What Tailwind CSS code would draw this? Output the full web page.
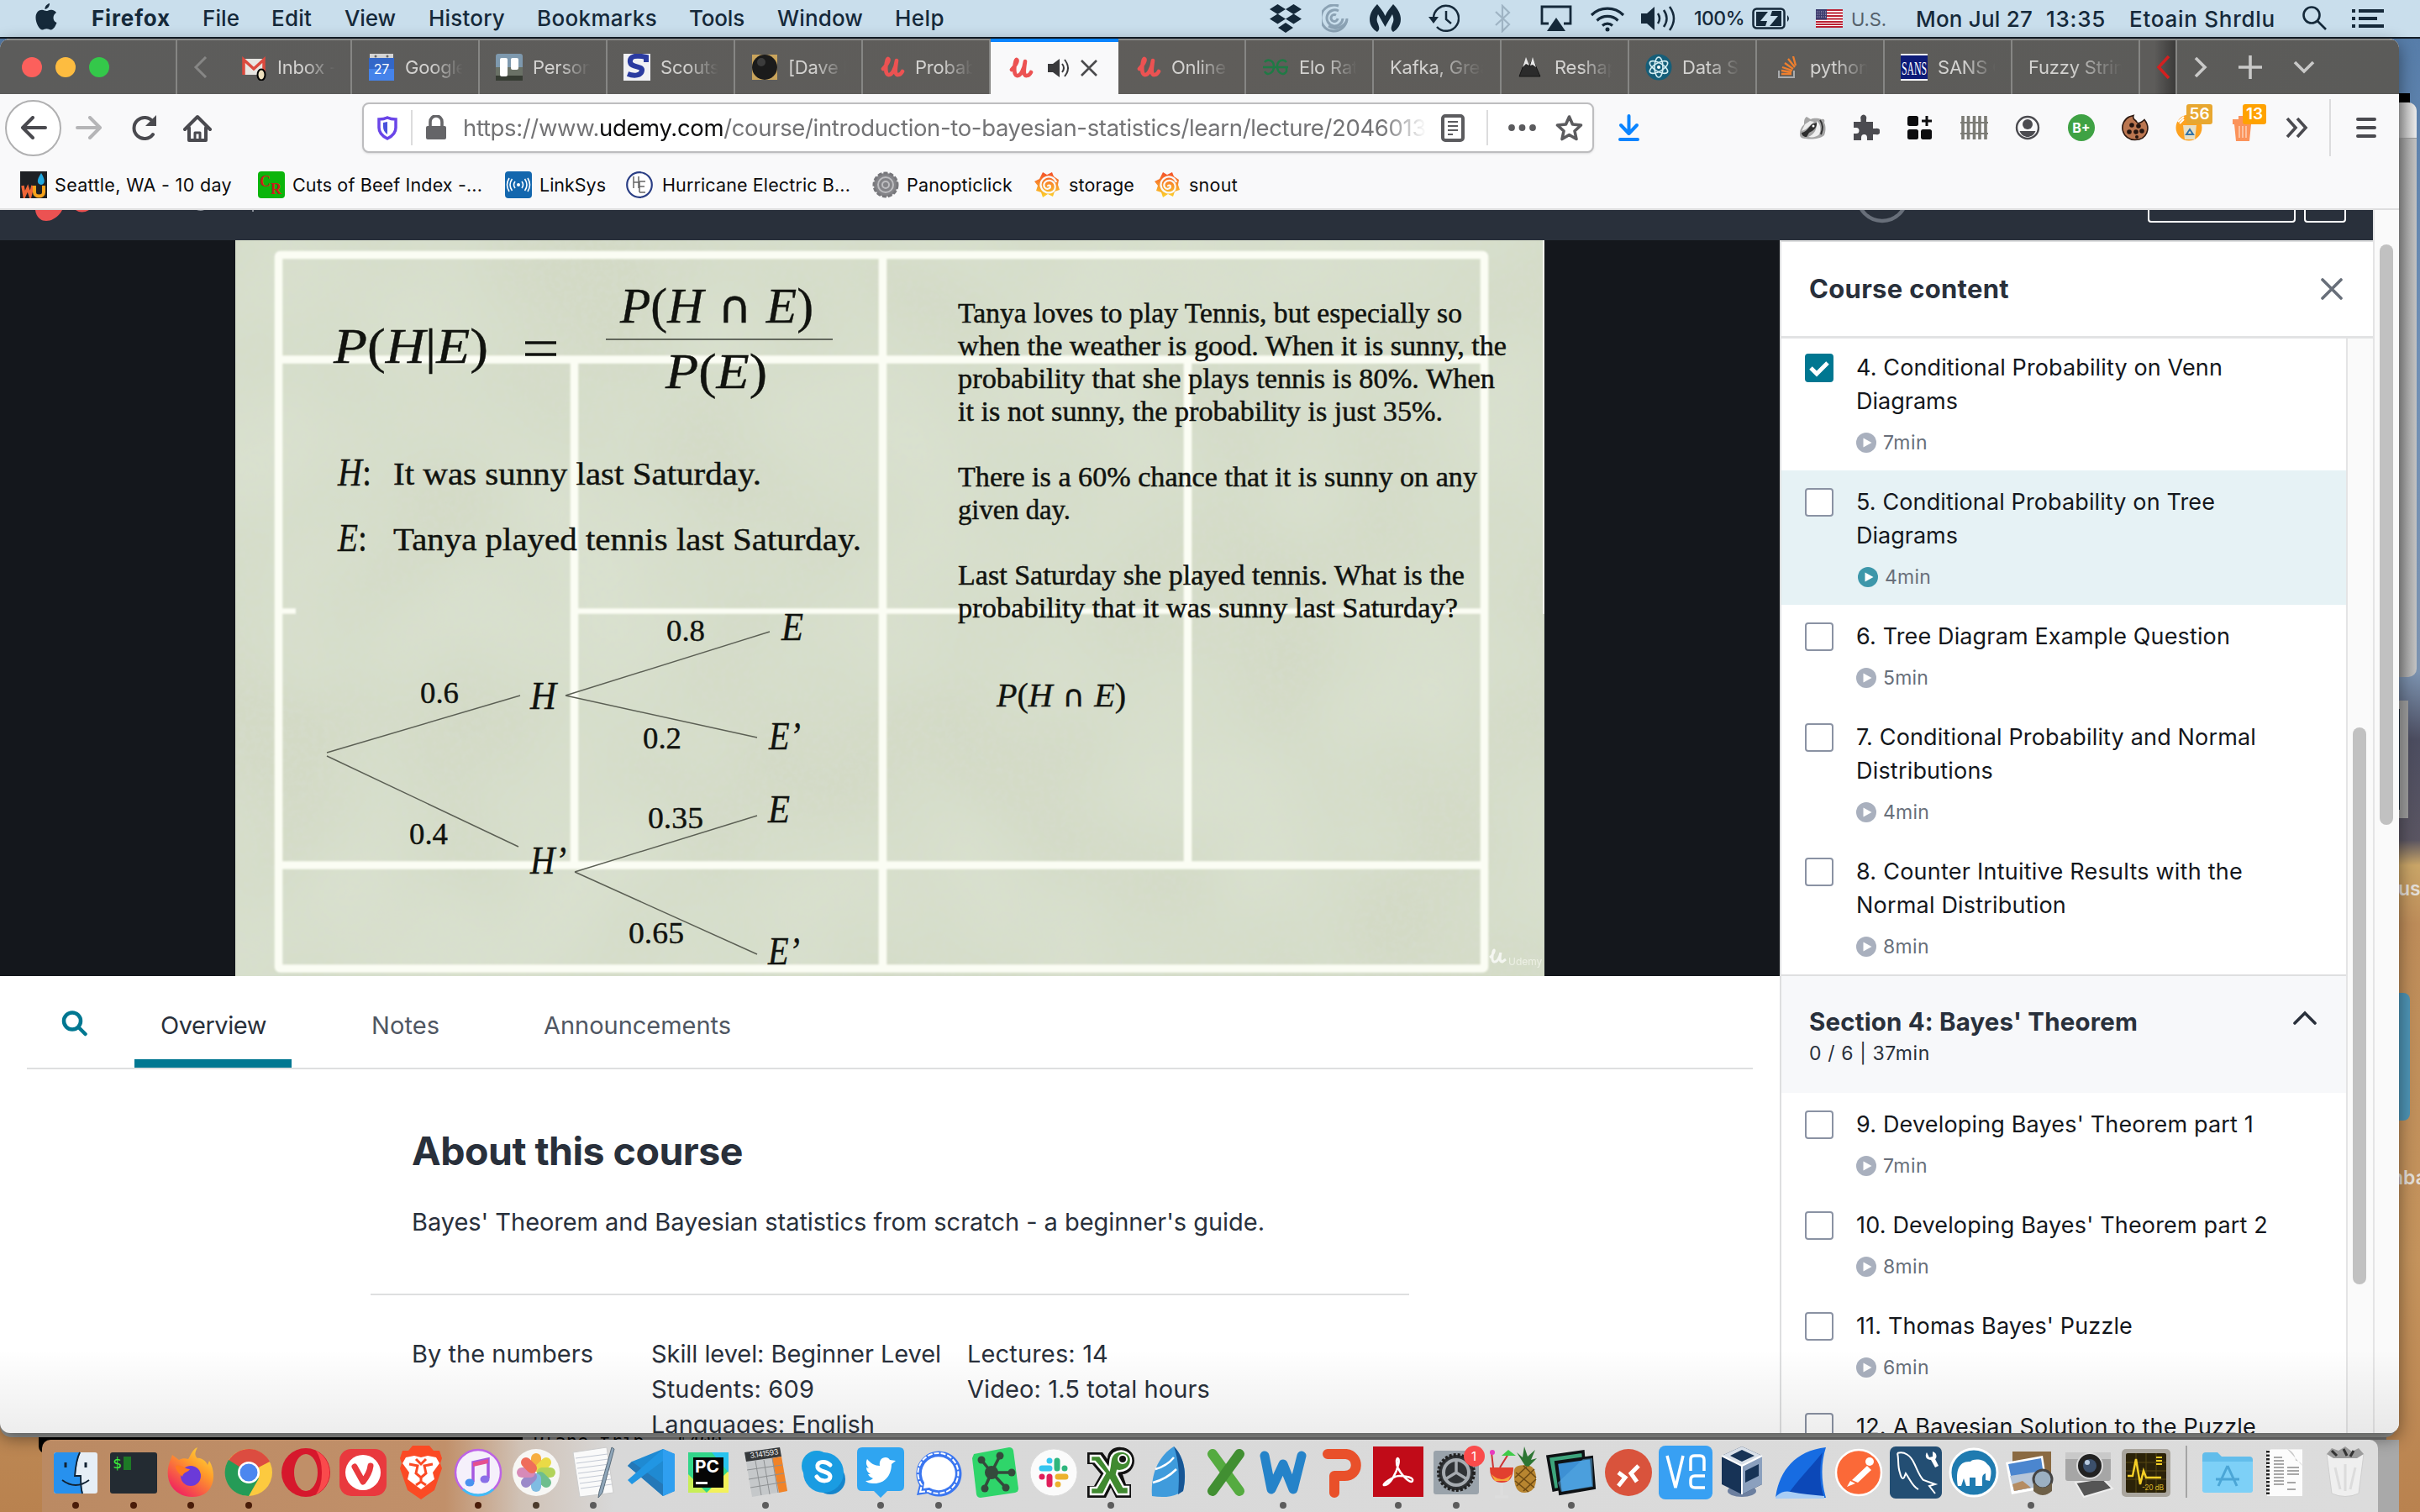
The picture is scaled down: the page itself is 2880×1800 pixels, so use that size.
<!DOCTYPE html>
<html lang="en">
<head>
<meta charset="utf-8">
<title>Introduction to Bayesian Statistics</title>
<script src="https://cdn.jsdelivr.net/npm/@tailwindcss/browser@4"></script>
</head>
<body class="relative w-[2880px] h-[1800px] overflow-hidden bg-[#5f82aa] font-['Inter','Liberation_Sans',sans-serif] [&_[data-w]]:whitespace-nowrap">

<svg class="absolute w-0 h-0">
  <symbol id="udemy" viewBox="0 0 28 26"><path d="M3 15C7 11 11 4 9 3 7 2 4 21 9 22c5 1 9-9 10-17-1 8-3 18 2 17 2 0 4-2 5-4" fill="none" stroke="#ec5252" stroke-width="4.6" stroke-linecap="round" stroke-linejoin="round"/></symbol>
  <symbol id="play" viewBox="0 0 24 24"><circle cx="12" cy="12" r="12" fill="currentColor"/><path d="M8.500 6.500v11L18.500 12z" fill="#fff"/></symbol>
  <symbol id="grafana" viewBox="0 0 32 32"><defs><linearGradient id="gg" x1="0" y1="0" x2="0" y2="1"><stop offset="0" stop-color="#f4502a"/><stop offset="1" stop-color="#fcd22b"/></linearGradient></defs><path d="M10 1l5 3 6-3 2 5 6 4-1 6 2 6-6 2-2 6-6-3-6 4-2-6-6-2 2-6-4-5 6-3z" fill="url(#gg)"/><path d="M27 15a10 10 0 1 0-6 9M21 24" fill="none"/><path d="M26 13a9.500 9.500 0 1 0-4 11c4-3 4-11-3-13-6-1-9 4-7 8 2 3 7 2 7-1 0-2-3-2-3 0" fill="none" stroke="#f9f9f9" stroke-width="2.200"/></symbol>
</svg>

<!-- desktop, visible along the right and bottom edges -->
<div class="absolute left-0 top-0 w-[2880px] h-[1800px] bg-[linear-gradient(180deg,#547ba8_0px,#6f8fb5_420px,#7c93b0_800px,#4c4d60_880px,#5a5562_1000px,#c9a567_1030px,#bd8c59_1100px,#c4935c_1500px,#b9824f_1800px)]"></div>
<div class="absolute left-[2840px] top-[111px] w-[28px] h-[30px] bg-black"></div>
<div class="absolute left-[2800px] top-[122px] w-[76px] h-[684px] rounded-[10px] bg-[linear-gradient(90deg,#8f8f8f_70%,#c4c4c4)] overflow-hidden"><div class="h-[43px] bg-[linear-gradient(90deg,#a6a6a6_70%,#ececec)] border-b border-[#999]"></div></div>
<div class="absolute left-[2840px] top-[834px] w-[26px] h-[140px] bg-[#1c2836] border-[10px] border-l-0 border-[#9b9b9b]"></div>
<div class="absolute left-[2855px] top-[1182px] w-[13px] h-[152px] rounded-r-lg bg-[#4d93b4]"></div>
<div class="absolute left-[2854px] top-[1044px] text-[23px] font-semibold text-[#e4dfd8] leading-7">us</div>
<div class="absolute left-[2846px] top-[1388px] text-[23px] font-semibold text-[#e4dfd8] leading-7">nba</div>
<!-- windows stacked behind the browser -->
<div class="absolute left-[46px] top-[1690px] w-[576px] h-[40px] rounded-b-lg bg-black"></div>
<div class="absolute left-[622px] top-[1690px] w-[2218px] h-[60px] bg-[#747474] overflow-hidden text-[22px] font-['DejaVu_Sans_Mono',monospace] pl-3 pt-3 leading-7">Plane trip - $400</div>
<div class="absolute left-[2500px] top-[1714px] w-[355px] h-[86px] bg-[#a9a9a9]"></div>
<div class="absolute left-0 top-[1690px] w-[2852px] h-[21px] rounded-b-[14px] bg-[#9b9c9a]"></div>

<!-- menu bar -->
<header class="absolute left-0 top-0 w-[2880px] h-[46px] bg-[#c9deec] border-b-2 border-[#141d27] flex items-center text-[26px] font-medium text-[#15293a] whitespace-nowrap">
  <svg class="ml-[42px] w-[26px] h-[32px] mb-1" viewBox="0 0 26 32" fill="#15293a"><path d="M17 0c.4 3-2.500 7-5.500 7C11 4 14 .6 17 0zM21.500 17c0-3 2-5 3.500-6-2-3-5-3.300-6.500-3.300-2.300 0-4 1.400-5.300 1.400-1.400 0-3-1.300-5.200-1.300C4 7.800.500 11 .500 17c0 6.500 4.500 14.500 8 14.500 1.800 0 2.700-1.200 5-1.200s3 1.200 5 1.200c3.300 0 6-5.500 7-8.500-3-1.200-4-3.500-4-6z"/></svg>
  <nav class="flex ml-[41px] leading-[44px]">
    <div class="w-[132px] font-bold"><span data-w="94">Firefox</span></div>
    <div class="w-[82px]"><span data-w="44">File</span></div>
    <div class="w-[87px]"><span data-w="48">Edit</span></div>
    <div class="w-[100px]"><span data-w="61">View</span></div>
    <div class="w-[129px]"><span data-w="91">History</span></div>
    <div class="w-[181px]"><span data-w="143">Bookmarks</span></div>
    <div class="w-[105px]"><span data-w="66">Tools</span></div>
    <div class="w-[140px]"><span data-w="102">Window</span></div>
    <div class="w-[446px]"><span data-w="59">Help</span></div>
  </nav>
  <div class="flex items-center">
    <svg class="w-[38px] h-[34px]" viewBox="0 0 38 34" fill="#15293a"><path d="M9.500 0L19 6l-9.500 6L0 6zM28.500 0L38 6l-9.500 6L19 6zM9.500 11.500L19 17.500l-9.500 6-9.500-6zM28.500 11.500L38 17.500l-9.500 6-9.500-6zM19 22l9 6-9 6-9-6z"/></svg>
    <svg class="ml-[24px] w-[32px] h-[34px]" viewBox="0 0 32 34" fill="none" stroke="#8ba2b4" stroke-width="3"><path d="M20 2A15.500 15.500 0 1 0 30 17M20 8A9.500 9.500 0 1 0 25 17M17 13a4 4 0 1 0 2 4"/><path d="M8 26a15 15 0 0 0 22-7"/></svg>
    <svg class="ml-[25px] w-[37px] h-[34px]" viewBox="0 0 37 34" fill="#15293a"><path d="M9 0c3 4 7 8 9.500 14C21 8 25 4 28 0c6 6 9 12 9 18 0 7-4 12-9 15-4-3-2-7 0-12 1-3 0-6-1-9l-8.500 15L10 12c-1 3-2 6-1 9 2 5 4 9 0 12-5-3-9-8-9-15C0 12 3 6 9 0z"/></svg>
    <svg class="ml-[32px] w-[38px] h-[34px]" viewBox="0 0 38 34" fill="none" stroke="#15293a" stroke-width="2.500"><path d="M7 17A15 15 0 1 1 11 27"/><path d="M1 15h12l-6 8z" fill="#15293a" stroke="none"/><path d="M22 8v10l6 5"/></svg>
    <svg class="ml-[42px] w-[19px] h-[34px]" viewBox="0 0 19 34" fill="none" stroke="#9fb4c4" stroke-width="2.200"><path d="M1 9l16 15-8 8V2l8 8L1 25"/></svg>
    <svg class="ml-[35px] w-[38px] h-[32px]" viewBox="0 0 38 32"><path d="M10 22H2V2h34v20h-8" fill="none" stroke="#15293a" stroke-width="2.800"/><path d="M19 15l11 16H8z" fill="#15293a"/></svg>
    <svg class="ml-[21px] w-[42px] h-[31px]" viewBox="0 0 42 31" fill="none" stroke="#15293a" stroke-width="3.200"><path d="M2 11a27 27 0 0 1 38 0M8.500 17.500a18 18 0 0 1 25 0M15 23.500a9 9 0 0 1 12 0"/><circle cx="21" cy="28" r="2.500" fill="#15293a" stroke="none"/></svg>
    <svg class="ml-[19px] w-[43px] h-[32px]" viewBox="0 0 43 32"><path d="M0 10h7l9-8v28l-9-8H0z" fill="#15293a"/><path d="M20 10q4 6 0 12M27 6q7 10 0 20M34 2q10 14 0 28" fill="none" stroke="#15293a" stroke-width="2.500"/></svg>
    <div class="ml-[20px] w-[69px] text-[23px]"><span data-w="60">100%</span></div>
    <svg class="w-[46px] h-[26px]" viewBox="0 0 46 26"><rect x="1.500" y="1.500" width="37" height="23" rx="4" fill="none" stroke="#15293a" stroke-width="2.500"/><path d="M5 5h14L10 16h8l-2 6H5zM24 4h11v18H21l10-12h-9z" fill="#15293a"/><path d="M42 9q4 4 0 8z" fill="#15293a"/></svg>
    <svg class="ml-[30px] w-[32px] h-[22px]" viewBox="0 0 32 22"><path fill="#fff" d="M0 0h32v22H0z"/><path d="M0 1h32M0 4.500h32M0 8h32M0 11.500h32M0 15h32M0 18h32M0 21h32" stroke="#bb2134" stroke-width="1.800"/><path fill="#3c3b6e" d="M0 0h13v12.500H0z"/><path d="M1 3h12M1 6h12M1 9h12" stroke="#c5c4da" stroke-dasharray="1 1.500"/></svg>
    <div class="ml-[10px] w-[77px] text-[22px] font-normal text-[#55616b] pt-0.5"><span data-w="42">U.S.</span></div>
    <div class="w-[155px]"><span data-w="139">Mon Jul 27</span></div>
    <div class="w-[99px]"><span data-w="71">13:35</span></div>
    <div class="w-[206px]"><span data-w="174">Etoain Shrdlu</span></div>
    <svg class="w-[30px] h-[30px]" viewBox="0 0 30 30" fill="none" stroke="#15293a" stroke-width="2.600"><circle cx="11" cy="11" r="9.500"/><path d="M18 18l10 10"/></svg>
    <svg class="ml-[29px] w-[38px] h-[22px]" viewBox="0 0 38 22" fill="#15293a"><path d="M0 0h4v4H0zM8 0h30v4H8zM0 9h4v4H0zM8 9h22v4H8zM0 18h4v4H0zM8 18h30v4H8z"/></svg>
  </div>
</header>

<!-- browser window -->
<main class="absolute left-0 top-[46px] w-[2855px] h-[1660px] rounded-[12px] overflow-hidden bg-white shadow-[0_6px_20px_rgba(0,0,0,0.45)] flex flex-col">

  <!-- tab strip -->
  <div class="h-[66px] shrink-0 bg-[linear-gradient(90deg,#5c5c5b,#5f5d5a_50%,#5b5b59)] border-t-2 border-[#8a8a88] flex text-[22px] text-[#d3d2d0] leading-[64px] tracking-[-0.01em] whitespace-nowrap">
    <div class="w-[211px] flex items-center pl-[26px] gap-4 border-r-2 border-[#868684]"><i class="size-6 rounded-full bg-[#fc605c]"></i><i class="size-6 rounded-full bg-[#fdbc40]"></i><i class="size-6 rounded-full bg-[#34c84a]"></i></div>
    <div class="w-[56px] flex items-center pl-[19px]"><svg class="w-[17px] h-[26px]" viewBox="0 0 17 26" fill="none" stroke="#868685" stroke-width="3"><path d="M15 1L3 13l12 12"/></svg></div>
    <div class="flex [&>div]:w-[152px] [&>div]:flex [&>div]:items-center [&>div]:pl-[19px] [&>div]:border-r-2 [&>div]:border-[#868684] [&>div]:overflow-hidden [&_p]:ml-3 [&_p]:w-[70px] [&_p]:overflow-hidden [&_p]:shrink-0 [&_p]:[mask-image:linear-gradient(90deg,#000_45%,transparent_98%)] [&_svg]:shrink-0">
      <div><svg class="w-[32px] h-[32px]" viewBox="0 0 32 32"><path fill="#e8e6e2" d="M3 6h26v19H3z"/><path d="M4 25V7l12 11L28 7v18" fill="none" stroke="#dc4a3e" stroke-width="3.500"/><ellipse cx="25" cy="25" rx="4.500" ry="6.500" fill="#eee0bd" stroke="#000" stroke-width="2"/></svg><p>Inbox -</p></div>
      <div><svg class="w-[32px] h-[32px]" viewBox="0 0 32 32"><path fill="#d4d4d4" d="M2 0h28v6H2z"/><path fill="#3367c8" d="M1 5h30v14H1z"/><path fill="#4583ea" d="M1 18h30v14H1z"/><circle cx="9" cy="3" r="1.500" fill="#666"/><circle cx="23" cy="3" r="1.500" fill="#666"/><text x="16" y="24" text-anchor="middle" font-size="16" fill="#fff" font-family="Inter">27</text></svg><p>Google</p></div>
      <div><svg class="w-[32px] h-[32px]" viewBox="0 0 32 32"><rect width="32" height="32" rx="3" fill="#7e99ae"/><path d="M0 16h32v16H0z" fill="#6a7166"/><path d="M0 26h32v6H0z" fill="#363c33"/><rect x="5" y="5" width="9" height="22" rx="2" fill="#fff"/><rect x="18" y="5" width="9" height="14" rx="2" fill="#fff"/></svg><p>Persona</p></div>
      <div><svg class="w-[32px] h-[32px]" viewBox="0 0 32 32"><path fill="#f1f1f4" d="M0 0h32v32H0z"/><path d="M27 10V4C14 1 7 3 8 10s15 4 14 10-9 7-17 4" fill="none" stroke="#2b3ba0" stroke-width="6"/></svg><p>Scouts</p></div>
      <div><svg class="w-[32px] h-[32px]" viewBox="0 0 32 32"><path fill="#c9a45c" d="M1 1h30v30H1z"/><circle cx="16" cy="16" r="15" fill="#1b1b1b"/><circle cx="12" cy="10" r="5" fill="#3c3c3c"/></svg><p>[Dave M</p></div>
      <div><svg class="w-[30px] h-[26px] ml-px"><use href="#udemy"/></svg><p>Probab</p></div>
      <div class="bg-[#f9f9fa] border-t-4 !border-t-[#0a84ff] -mt-[2px] !border-r-0"><svg class="w-[30px] h-[26px] ml-0.5"><use href="#udemy"/></svg><svg class="ml-[17px] w-[28px] h-[24px]" viewBox="0 0 28 24"><path d="M0 7h6l8-6v22l-8-6H0z" fill="#3a3a3c"/><path d="M17 7q4 5 0 10M20 2q8 10 0 20" stroke="#3a3a3c" stroke-width="2" fill="none"/></svg><svg class="ml-[11px] w-[20px] h-[20px]" viewBox="0 0 20 20" stroke="#4a4a4c" stroke-width="2.600"><path d="M1 1l18 18M19 1L1 19"/></svg></div>
      <div><svg class="w-[30px] h-[26px] ml-0.5"><use href="#udemy"/></svg><p>Online C</p></div>
      <div><svg class="w-[32px] h-[20px]" viewBox="0 0 32 20" fill="none" stroke="#1f7a45" stroke-width="2.500"><path d="M1 10h30M3 4c3-4 11-3 11 5s-8 12-11 6M29 4c-3-4-11-3-11 5s8 12 11 6v-5"/></svg><p>Elo Rat</p></div>
      <div><p class="!ml-0 !w-[114px]">Kafka, Great</p></div>
      <div><svg class="w-[32px] h-[28px]" viewBox="0 0 32 28"><path d="M2 25L10 4l4 9 4-9 9 21z" fill="#2b2b2b" stroke="#161616"/><path d="M10 2l4 10-4-2-4 4zM18 2l4 12-4-3-3 1z" fill="#e9e9e9"/></svg><p>Reshap</p></div>
      <div><svg class="w-[32px] h-[32px]" viewBox="0 0 32 32"><circle cx="16" cy="16" r="15.500" fill="#155e79"/><g fill="none" stroke="#d5eef3" stroke-width="1.600"><ellipse cx="16" cy="16" rx="5" ry="12"/><ellipse cx="16" cy="16" rx="5" ry="12" transform="rotate(60 16 16)"/><ellipse cx="16" cy="16" rx="5" ry="12" transform="rotate(120 16 16)"/></g><circle cx="16" cy="16" r="2" fill="#fff"/></svg><p>Data Sc</p></div>
      <div><svg class="w-[32px] h-[26px]" viewBox="0 0 32 26" fill="none"><path d="M7 17v8h18v-8" stroke="#a9abad" stroke-width="2"/><path d="M10 21h12M10 17l12 2M11 13l12 4M14 8l10 7M18 3l8 10M24 0l3 11" stroke="#ee7f2e" stroke-width="2.300"/></svg><p>python</p></div>
      <div><svg class="w-[32px] h-[32px]" viewBox="0 0 32 32"><path fill="#fff" d="M0 0h32v32H0z"/><path fill="#0d1b78" d="M0 2h32v28H0z"/><text x="1" y="25" textLength="30" lengthAdjust="spacingAndGlyphs" font-size="24" fill="#fff" font-family="Liberation Serif">SANS</text></svg><p>SANS C</p></div>
      <div><p class="!ml-0 !w-[114px]">Fuzzy String</p></div>
    </div>
    <div class="w-[44px] flex items-center pl-[18px] border-r-2 border-[#868684] bg-[linear-gradient(90deg,#5d5c5a_40%,#3c3b3a)]"><svg class="w-[20px] h-[28px]" viewBox="0 0 20 28" fill="none" stroke="#d32020" stroke-width="3.500"><path d="M16 1L4 14l12 13"/></svg></div>
    <div class="flex items-center pl-5 gap-[37px]">
      <svg class="w-[16px] h-[26px]" viewBox="0 0 16 26" fill="none" stroke="#c9c9c8" stroke-width="3.600"><path d="M2 2l11 11L2 24"/></svg>
      <svg class="w-[28px] h-[28px]" viewBox="0 0 28 28" stroke="#c9c9c8" stroke-width="3.600"><path d="M14 0v28M0 14h28"/></svg>
      <svg class="w-[26px] h-[16px]" viewBox="0 0 26 16" fill="none" stroke="#c9c9c8" stroke-width="3.600"><path d="M2 2l11 11L24 2"/></svg>
    </div>
  </div>

  <!-- navigation toolbar -->
  <div class="h-[80px] shrink-0 bg-[#f9f9fa] flex items-center pl-[6px] [&_svg]:shrink-0">
    <div class="size-[67px] shrink-0 rounded-full border-2 border-[#b0b0b1] bg-white flex items-center justify-center"><svg class="w-[32px] h-[28px]" viewBox="0 0 32 28" fill="none" stroke="#4a4a4f" stroke-width="4" stroke-linecap="round" stroke-linejoin="round"><path d="M30 14H3M15 2L3 14l12 12"/></svg></div>
    <svg class="ml-[17px] w-[32px] h-[28px]" viewBox="0 0 32 28" fill="none" stroke="#b5b5b7" stroke-width="4" stroke-linecap="round" stroke-linejoin="round"><path d="M2 14h27M17 2l12 12-12 12"/></svg>
    <svg class="ml-[34px] w-[32px] h-[30px]" viewBox="0 0 32 30" fill="none" stroke="#4a4a4f" stroke-width="4" stroke-linecap="round"><path d="M26 23a12.500 12.500 0 1 1 0-15"/><path d="M30 0v13H17z" fill="#4a4a4f" stroke="none"/></svg>
    <svg class="ml-[30px] w-[34px] h-[33px]" viewBox="0 0 34 33" fill="none" stroke="#4a4a4f" stroke-width="4" stroke-linecap="round" stroke-linejoin="round"><path d="M2 18L17 3l15 15M7 16v15h20V16"/><path d="M14 31v-9h6v9" stroke-width="3"/></svg>
    <div class="ml-[179px] w-[1466px] h-[60px] shrink-0 bg-white border-2 border-[#bdbdbf] rounded-lg shadow-sm flex items-center">
      <svg class="ml-[16px] w-[24px] h-[29px]" viewBox="0 0 24 29" fill="none"><path d="M12 2c4 2 7 2 10 2v10c0 6-4 10-10 13C6 24 2 20 2 14V4c3 0 6 0 10-2z" stroke="#6a45e8" stroke-width="3.500"/><path d="M12 7v15c-4-3-5-6-5-9V8z" fill="#4a51dc"/></svg>
      <i class="ml-[16px] w-[2px] h-[42px] bg-[#dcdcdd]"></i>
      <svg class="ml-[16px] w-[24px] h-[30px]" viewBox="0 0 24 30"><rect y="13" width="24" height="16" rx="2" fill="#656568"/><path d="M5 14V8a7 7 0 0 1 14 0v6" fill="none" stroke="#656568" stroke-width="3.600"/></svg>
      <div class="ml-[20px] w-[1164px] text-[27.5px] leading-[56px] text-[#737375] whitespace-nowrap [mask-image:linear-gradient(90deg,#000_94%,transparent_98.5%)]"><span data-w="1146">https://www.<span class="text-[#0c0c0d]">udemy.com</span>/course/introduction-to-bayesian-statistics/learn/lecture/2046013</span></div>
      <svg class="w-[28px] h-[33px]" viewBox="0 0 28 33" fill="none" stroke="#5b5b5e"><rect x="2" y="2" width="24" height="29" rx="3" stroke-width="4"/><path d="M8 9h12M8 14h12M8 19h12M8 24h6" stroke-width="2"/></svg>
      <i class="ml-[26px] w-[2px] h-[42px] bg-[#dcdcdd]"></i>
      <svg class="ml-[24px] w-[33px] h-[8px]" viewBox="0 0 33 8" fill="#5b5b5e"><circle cx="4" cy="4" r="3.900"/><circle cx="16.500" cy="4" r="3.900"/><circle cx="29" cy="4" r="3.900"/></svg>
      <svg class="ml-[23px] w-[33px] h-[32px]" viewBox="0 0 33 32" fill="none" stroke="#5b5b5e" stroke-width="3.600" stroke-linejoin="round"><path d="M16.500 3l4 9 10 1-7.500 7 2 9.500-8.500-5-8.500 5 2-9.500L2.500 13l10-1z"/></svg>
    </div>
    <svg class="ml-[29px] w-[25px] h-[32px]" viewBox="0 0 25 32" fill="none" stroke="#0a84ff" stroke-width="4" stroke-linecap="round" stroke-linejoin="round"><path d="M12.500 2v20M3 13l9.500 10 9.500-10M2 30h21"/></svg>
    <div class="ml-[174px] flex items-center [&>div]:w-[64px] [&>div]:flex [&>div]:justify-center [&>div]:relative">
      <div><svg class="w-[32px] h-[28px]" viewBox="0 0 32 28"><path d="M1 22c0-6 2-9 5-12 0-4 0-7 3-9l5 3c4-2 9-1 13 0 3-1 4 1 3 4 2 4 2 10 0 15-6 5-16 5-22 4-4 0-7-1-7-5z" fill="#a5a5a5"/><path d="M3 20c6-1 9-7 12-10l6-2c1 5-4 10-9 12l-3 5c-3 0-6-2-6-5z" fill="#2e2e2e"/><path d="M7 10l6-4 5 1-10 9-5 2z" fill="#ededed"/><path d="M21 6c4 3 6 9 3 16-3 3-8 4-13 3 7-3 11-9 10-19z" fill="#efefef"/><path d="M25 5c3 4 4 10 1 17" fill="none" stroke="#333" stroke-width="2"/><circle cx="17" cy="12" r="1.500" fill="#fff"/></svg></div>
      <div><svg class="w-[32px] h-[32px]" viewBox="0 0 32 32" fill="#4b4b50"><path d="M1 9h8.500V6a3.500 4 0 1 1 6.500 0v3h8v8h3a4 3.800 0 1 1 0 7h-3v7h-7v-3a3 3.500 0 0 0-7 0v3H1v-8h3a3 3 0 0 0 0-7H1z"/></svg></div>
      <div><svg class="w-[30px] h-[28px]" viewBox="0 0 30 28" fill="#0d0d0f"><rect width="13" height="12" rx="2.500"/><rect y="16" width="13" height="12" rx="2.500"/><rect x="16" y="16" width="13" height="12" rx="2.500"/><path d="M21.500 0h3v4.500H29v3h-4.500V12h-3V7.500H17v-3h4.500z"/></svg></div>
      <div><svg class="w-[33px] h-[28px]" viewBox="0 0 33 28" stroke="#7b7b75"><path d="M3 0v28M9.500 0v28M16.500 0v28M23 0v28M30 0v28" stroke-width="3.600"/><path d="M0 8h33M0 21h33" stroke-width="2"/></svg></div>
      <div><svg class="w-[30px] h-[30px]" viewBox="0 0 30 30"><circle cx="15" cy="15" r="13" fill="none" stroke="#4b4b50" stroke-width="2.400"/><circle cx="15" cy="11" r="6" fill="#4b4b50"/><path d="M5.500 19h19c-2 5-6 7-9.500 7s-7.500-2-9.500-7z" fill="#4b4b50"/></svg></div>
      <div><span class="size-8 rounded-full bg-[#3fa244] text-white font-bold text-[16px] leading-8 text-center">B+</span></div>
      <div><svg class="w-[32px] h-[32px]" viewBox="0 0 32 32"><path d="M14 1.500c-2 5 3 5 4 8 1 2 5 1 9-3 8 10 3 24-11 24A14.500 14.500 0 0 1 9 3z" fill="#bb7650" stroke="#2b1810" stroke-width="1.600"/><g fill="#241510"><circle cx="12" cy="13" r="2.800"/><circle cx="20" cy="14" r="2.800"/><circle cx="9" cy="21" r="2.800"/><circle cx="17" cy="21" r="2.800"/><circle cx="24" cy="20" r="2.800"/><circle cx="18" cy="27" r="2"/></g></svg></div>
      <div><svg class="w-[32px] h-[32px]" viewBox="0 0 32 32"><circle cx="16" cy="16" r="15.500" fill="#fda220"/><path d="M3 9l7-6M5 11l5-5" stroke="#fff" stroke-width="2"/><path d="M9 13h16l-2 17H11z" fill="#e8dfc4"/><path d="M13 24l4-6 4 6z" fill="none" stroke="#3273a7" stroke-width="2"/></svg><b class="absolute left-[29px] top-[-12px] w-[31px] h-[24px] rounded-[3px] bg-[#e8a730] text-white text-[19px] font-semibold leading-[24px] text-center">56</b></div>
      <div><svg class="w-[26px] h-[30px] mt-0.5" viewBox="0 0 26 30"><path d="M1 4h7V0h10v4h7v6h-2l-2 20H5L3 10H1z" fill="#fb935a"/><path d="M9 12v14M13 12v14M17 12v14" stroke="#fdc7a6" stroke-width="1.800"/></svg><b class="absolute left-[32px] top-[-12px] w-[28px] h-[24px] rounded-[3px] bg-[#ffa200] text-white text-[19px] font-semibold leading-[24px] text-center">13</b></div>
      <div><svg class="w-[27px] h-[24px]" viewBox="0 0 27 24" fill="none" stroke="#4b4b50" stroke-width="3.600"><path d="M2 1l10 11L2 23M14 1l10 11-10 11"/></svg></div>
    </div>
    <i class="ml-[7px] w-[2px] h-[68px] bg-[#dcdcdd]"></i>
    <svg class="ml-[30px] w-[24px] h-[24px]" viewBox="0 0 24 24" stroke="#4a4a4f" stroke-width="4" stroke-linecap="round"><path d="M2 2h20M2 12h20M2 22h20"/></svg>
  </div>

  <!-- bookmarks bar -->
  <div class="h-[58px] shrink-0 bg-[#f9f9fa] border-b-2 border-[#dededf] flex pl-[24px] items-center text-[21.5px] text-[#0c0c0d] whitespace-nowrap [&>div]:flex [&>div]:items-center [&>div]:gap-[9px] [&_svg]:size-8 [&_svg]:shrink-0">
    <div class="w-[283px]"><svg viewBox="0 0 32 32"><path fill="#1e2024" d="M0 0h32v32H0z"/><path d="M3 17l2 12 4-9 3 9 3-12" fill="none" stroke="#ef6537" stroke-width="3.500"/><path d="M17 17v8c0 6 11 6 11 0v-8" fill="none" stroke="#f5a21b" stroke-width="4"/><path d="M25 2c-6 9-5 13 0 14 5-1 5-6 0-14z" fill="#22a9e0"/></svg><span data-w="211">Seattle, WA - 10 day</span></div>
    <div class="w-[294px]"><svg viewBox="0 0 32 32"><rect width="32" height="32" rx="4" fill="#0bb50b"/><text x="2" y="18" font-size="18" font-weight="bold" fill="#c8201b" font-family="Liberation Serif">C</text><text x="15" y="27" font-size="18" font-weight="bold" fill="#c8201b" font-family="Liberation Serif">R</text></svg><span data-w="226">Cuts of Beef Index -...</span></div>
    <div class="w-[144px]"><svg viewBox="0 0 32 32"><rect width="32" height="32" rx="4" fill="#1367ae"/><circle cx="16" cy="16" r="2" fill="#fff"/><path d="M12 12q-3 4 0 8M20 12q3 4 0 8M8.500 9q-5 7 0 14M23.500 9q5 7 0 14M5 8q-5 8 0 16M27 8q5 8 0 16" fill="none" stroke="#fff" stroke-width="1.600"/></svg><span data-w="79">LinkSys</span></div>
    <div class="w-[293px] !gap-[11px]"><svg viewBox="0 0 32 32"><circle cx="16" cy="16" r="14.800" fill="#fff" stroke="#2b3f85" stroke-width="2.200"/><path d="M9 6v14M15 6v14M9 13h6M16 12v13M16 12h7M16 18h6M16 25h7" stroke="#666" stroke-width="1.500"/></svg><span data-w="224">Hurricane Electric B...</span></div>
    <div class="w-[193px]"><svg viewBox="0 0 32 32" fill="none"><circle cx="16" cy="16" r="14" fill="#848488" stroke="#77777b" stroke-width="3" stroke-dasharray="5 2"/><circle cx="16" cy="16" r="9" stroke="#bdbdc0" stroke-width="2"/><circle cx="16" cy="16" r="4" stroke="#bdbdc0" stroke-width="2"/></svg><span data-w="126">Panopticlick</span></div>
    <div class="w-[143px]"><svg><use href="#grafana"/></svg><span data-w="78">storage</span></div>
    <div><svg><use href="#grafana"/></svg><span data-w="58">snout</span></div>
  </div>

  <!-- page -->
  <div class="flex grow min-h-0">
    <div class="w-[2824px] shrink-0 flex flex-col">
      <!-- site header, scrolled mostly out of view -->
      <div class="relative h-[36px] shrink-0 bg-[#29303b] overflow-hidden">
        <svg class="w-[2824px] h-[36px]" viewBox="0 0 2824 36" fill="none"><path d="M42 0c1 8 6 13 13 13S70 8 74 0z" fill="#ec5252"/><path d="M90 0q7 5 16 0z" fill="#ec5252"/><path d="M234 0q5 2 9 0zM300 0h2v2h-2z" fill="#8b9099"/><circle cx="2240" cy="-16" r="29" stroke="#686f7a" stroke-width="4.500"/><rect x="2557" y="-40" width="174" height="54" rx="3" stroke="#fff" stroke-width="2"/><rect x="2743" y="-40" width="48" height="54" rx="3" stroke="#fff" stroke-width="2"/></svg>
      </div>
      <div class="flex grow min-h-0">
        <div class="w-[2118px] shrink-0 flex flex-col">
          <!-- video -->
          <div class="h-[876px] shrink-0 bg-[#14171c] pl-[280px]">
            <svg class="w-[1558px] h-[876px] bg-[#d3dac5]" viewBox="280 286 1558 876" font-family="'Liberation Serif',serif" fill="#11130f">
              <defs>
                <filter id="grain" x="0" y="0" width="100%" height="100%"><feTurbulence type="fractalNoise" baseFrequency="0.14" numOctaves="3" seed="4"/><feColorMatrix values="0 0 0 0 .68  0 0 0 0 .72  0 0 0 0 .64  .9 0 0 0 -.3"/></filter>
                <filter id="soft" x="-5%" y="-5%" width="110%" height="110%"><feGaussianBlur stdDeviation="1.300"/></filter>
                <filter id="tone" x="0" y="0" width="100%" height="100%"><feTurbulence type="fractalNoise" baseFrequency="0.005" numOctaves="2" seed="9"/><feColorMatrix values="0 0 0 0 .8  0 0 0 0 .88  0 0 0 0 .77  .5 0 0 0 -.1"/></filter>
              </defs>
              <rect x="280" y="286" width="1558" height="876" filter="url(#tone)"/>
              <rect x="280" y="286" width="1558" height="876" filter="url(#grain)"/>
              <g fill="none" stroke="#fbfdf4" stroke-width="9.500" filter="url(#soft)">
                <rect x="331.500" y="303.500" width="1435" height="849.500" rx="2"/>
                <path d="M331 428H1767M331 1030H1767M1050.500 303V1153M683.500 428V1030M1413.500 428V1030"/>
                <path d="M331 727.500h21M681 727.500h1086" stroke-width="6.500"/>
              </g>
              <path d="M1837 286v445" stroke="#f4f7ee" stroke-width="2"/>
              <g font-size="33.500" stroke="#11130f" stroke-width=".5">
                <text x="1140" y="384" textLength="600" lengthAdjust="spacingAndGlyphs">Tanya loves to play Tennis, but especially so</text>
                <text x="1140" y="423" textLength="653" lengthAdjust="spacingAndGlyphs">when the weather is good. When it is sunny, the</text>
                <text x="1140" y="462" textLength="639" lengthAdjust="spacingAndGlyphs">probability that she plays tennis is 80%. When</text>
                <text x="1140" y="501" textLength="577" lengthAdjust="spacingAndGlyphs">it is not sunny, the probability is just 35%.</text>
                <text x="1140" y="579" textLength="618" lengthAdjust="spacingAndGlyphs">There is a 60% chance that it is sunny on any</text>
                <text x="1140" y="618" textLength="134" lengthAdjust="spacingAndGlyphs">given day.</text>
                <text x="1140" y="695.500" textLength="603" lengthAdjust="spacingAndGlyphs">Last Saturday she played tennis. What is the</text>
                <text x="1140" y="734.500" textLength="595" lengthAdjust="spacingAndGlyphs">probability that it was sunny last Saturday?</text>
              </g>
              <g font-size="38.500" stroke="#11130f" stroke-width=".45">
                <text x="468" y="577" textLength="438" lengthAdjust="spacingAndGlyphs">It was sunny last Saturday.</text>
                <text x="468" y="655" textLength="557" lengthAdjust="spacingAndGlyphs">Tanya played tennis last Saturday.</text>
              </g>
              <g font-size="36" stroke="#11130f" stroke-width=".4">
                <text x="793" y="763" textLength="46" lengthAdjust="spacingAndGlyphs">0.8</text>
                <text x="500" y="837" textLength="46" lengthAdjust="spacingAndGlyphs">0.6</text>
                <text x="765" y="891" textLength="46" lengthAdjust="spacingAndGlyphs">0.2</text>
                <text x="771" y="986" textLength="66" lengthAdjust="spacingAndGlyphs">0.35</text>
                <text x="487" y="1005" textLength="46" lengthAdjust="spacingAndGlyphs">0.4</text>
                <text x="748" y="1122.500" textLength="66" lengthAdjust="spacingAndGlyphs">0.65</text>
              </g>
              <g font-size="46" font-style="italic" stroke="#11130f" stroke-width=".4">
                <text x="402" y="578" textLength="40" lengthAdjust="spacingAndGlyphs">H<tspan font-style="normal">:</tspan></text>
                <text x="402" y="656" textLength="35" lengthAdjust="spacingAndGlyphs">E<tspan font-style="normal">:</tspan></text>
                <text x="930" y="762" textLength="26" lengthAdjust="spacingAndGlyphs">E</text><text x="631" y="844" textLength="31" lengthAdjust="spacingAndGlyphs">H</text>
                <text x="915" y="892" textLength="38" lengthAdjust="spacingAndGlyphs">E’</text><text x="914" y="979" textLength="26" lengthAdjust="spacingAndGlyphs">E</text>
                <text x="631" y="1040" textLength="43" lengthAdjust="spacingAndGlyphs">H’</text><text x="914" y="1148" textLength="38" lengthAdjust="spacingAndGlyphs">E’</text>
              </g>
              <g font-size="59" font-style="italic" stroke="#11130f" stroke-width=".4">
                <text x="397" y="432" textLength="184" lengthAdjust="spacingAndGlyphs">P<tspan font-style="normal">(</tspan>H<tspan font-style="normal">|</tspan>E<tspan font-style="normal">)</tspan></text>
                <text x="738" y="384" textLength="230" lengthAdjust="spacingAndGlyphs">P<tspan font-style="normal">(</tspan>H<tspan font-style="normal" font-family="DejaVu Sans" font-size="54"> ∩ </tspan>E<tspan font-style="normal">)</tspan></text>
                <text x="792" y="462" textLength="121" lengthAdjust="spacingAndGlyphs">P<tspan font-style="normal">(</tspan>E<tspan font-style="normal">)</tspan></text>
                <text x="1186" y="841" font-size="40" textLength="154" lengthAdjust="spacingAndGlyphs">P<tspan font-style="normal">(</tspan>H<tspan font-style="normal" font-family="DejaVu Sans" font-size="36"> ∩ </tspan>E<tspan font-style="normal">)</tspan></text>
              </g>
              <path d="M625 408h37M625 422h37" stroke="#11130f" stroke-width="3.500"/>
              <path d="M721 404h270" stroke="#3c4038" stroke-width="1.600"/>
              <path d="M389 896L619 828M389 900L617 1008M673 828L916 752M673 828L901 878M684 1038L901 971M684 1038L901 1136" fill="none" stroke="#5b5f54" stroke-width="1.400"/>
              <g opacity=".75"><path d="M1773 1140c4-3 6-9 5-9s-4 13 0 14 7-6 8-11c-1 5-2 11 2 11l4-3" fill="none" stroke="#fff" stroke-width="3"/><text x="1795" y="1149" font-size="12" font-family="Inter" fill="#f5f7ee">Udemy</text></g>
            </svg>
          </div>

          <!-- course tabs -->
          <div class="ml-[32px] w-[2054px] h-[111px] shrink-0 border-b-2 border-[#dedfe0] flex text-[29px] text-[#505763]">
            <svg class="ml-[41px] mt-[41px] w-[32px] h-[31px]" viewBox="0 0 32 31" fill="none" stroke="#007791" stroke-width="4.500" stroke-linecap="round"><circle cx="13" cy="12.500" r="10"/><path d="M20.500 20l8 8"/></svg>
            <div class="ml-[55px] w-[187px] pl-[31px] leading-[118px] h-[109px] border-b-[10px] border-[#007791] text-[#29303b]"><span data-w="126">Overview</span></div>
            <div class="ml-[95px] w-[205px] leading-[118px]"><span data-w="81">Notes</span></div>
            <div class="leading-[118px]"><span data-w="223">Announcements</span></div>
          </div>

          <!-- about -->
          <section class="ml-[441px] w-[1236px] text-[29px] text-[#29303b] leading-[42px]">
            <h1 class="mt-[67px] pl-[49px] text-[46.5px] leading-[60px] font-bold"><span data-w="394">About this course</span></h1>
            <p class="mt-[33px] mb-[63px] pl-[49px] leading-[44px]"><span data-w="1015">Bayes' Theorem and Bayesian statistics from scratch - a beginner's guide.</span></p>
            <div class="border-t-2 border-[#dedfe0] pt-[49px] pl-[49px] flex">
              <div class="w-[285px]"><span data-w="216">By the numbers</span></div>
              <div class="w-[376px]"><span data-w="345">Skill level: Beginner Level</span><br><span data-w="194">Students: 609</span><br><span data-w="266">Languages: English</span></div>
              <div><span data-w="168">Lectures: 14</span><br><span data-w="289">Video: 1.5 total hours</span></div>
            </div>
          </section>
        </div>

        <!-- course content -->
        <aside class="w-[706px] shrink-0 border-l-2 border-[#dedfe0] border-t-2 flex flex-col">
          <div class="h-[115px] shrink-0 border-b-[3px] border-[#e2e3e4] flex items-center justify-between pl-[33px] pr-[36px] text-[31px] font-bold text-[#29303b]"><span data-w="238">Course content</span><svg class="w-[26px] h-[26px]" viewBox="0 0 26 26" stroke="#686f7a" stroke-width="3.600" stroke-linecap="round"><path d="M2 2l22 22M24 2L2 24"/></svg></div>
          <div class="flex grow min-h-0">
            <ul class="w-[672px] overflow-hidden text-[27px] leading-[40px] text-[#14171c] [&>li]:flex [&>li]:pl-[28px] [&>li]:gap-[27px] [&>li>i]:mt-[21px] [&>li>i]:size-[34px] [&>li>i]:rounded-[4px] [&>li>i]:border-2 [&>li>i]:border-[#8a92a3] [&>li>i]:bg-white [&>li>i]:shrink-0 [&>li>div]:pt-[18px] [&_p]:mt-[9px] [&_p]:flex [&_p]:items-center [&_p]:gap-[8px] [&_p]:text-[23px] [&_p]:text-[#686f7a] [&_svg]:size-6 [&_p_svg]:text-[#a9b0be]">
              <li class="h-[160px] -mt-[3px]"><i class="!bg-[#007791] !border-[#007791] flex items-center justify-center"><svg viewBox="0 0 24 24" fill="none" stroke="#fff" stroke-width="5"><path d="M2 12l7 7L22 6"/></svg></i><div><span data-w="436">4. Conditional Probability on Venn</span><br><span data-w="121">Diagrams</span><p><svg><use href="#play"/></svg><span data-w="53">7min</span></p></div></li>
              <li class="h-[160px] bg-[#e6f2f5]"><i></i><div><span data-w="427">5. Conditional Probability on Tree</span><br><span data-w="121">Diagrams</span><p class="ml-[2px]"><svg class="!text-[#3d97aa]"><use href="#play"/></svg><span data-w="55">4min</span></p></div></li>
              <li class="h-[120px]"><i></i><div><span data-w="445">6. Tree Diagram Example Question</span><p><svg><use href="#play"/></svg><span data-w="54">5min</span></p></div></li>
              <li class="h-[160px]"><i></i><div><span data-w="476">7. Conditional Probability and Normal</span><br><span data-w="163">Distributions</span><p><svg><use href="#play"/></svg><span data-w="55">4min</span></p></div></li>
              <li class="h-[160px]"><i></i><div><span data-w="460">8. Counter Intuitive Results with the</span><br><span data-w="250">Normal Distribution</span><p><svg><use href="#play"/></svg><span data-w="55">8min</span></p></div></li>
              <li class="h-[141px] bg-[#f7f8fa] border-t-2 border-[#dedfe0] !pl-[33px] justify-between pr-[35px] text-[#29303b]"><div class="!pt-[34px]"><b class="text-[29.5px]"><span data-w="391">Section 4: Bayes' Theorem</span></b><div class="text-[23px] leading-[32px]"><span data-w="144">0 / 6 | 37min</span></div></div><svg class="!w-[28px] !h-[17px] mt-[41px]" viewBox="0 0 28 17" fill="none" stroke="#29303b" stroke-width="3.600" stroke-linecap="round"><path d="M2 15L14 3l12 12"/></svg></li>
              <li class="h-[120px]"><i></i><div><span data-w="473">9. Developing Bayes' Theorem part 1</span><p><svg><use href="#play"/></svg><span data-w="53">7min</span></p></div></li>
              <li class="h-[120px]"><i></i><div><span data-w="490">10. Developing Bayes' Theorem part 2</span><p><svg><use href="#play"/></svg><span data-w="55">8min</span></p></div></li>
              <li class="h-[120px]"><i></i><div><span data-w="329">11. Thomas Bayes' Puzzle</span><p><svg><use href="#play"/></svg><span data-w="55">6min</span></p></div></li>
              <li class="h-[120px]"><i></i><div><span data-w="476">12. A Bayesian Solution to the Puzzle</span></div></li>
            </ul>
            <div class="w-[32px] bg-[#fafafa] border-l-2 border-[#e4e4e5] pt-[463px] pl-[6px]"><div class="w-4 h-[663px] rounded-full bg-[#c1c1c1]"></div></div>
          </div>
        </aside>
      </div>
    </div>
    <div class="w-[31px] bg-[#fafafa] border-l-2 border-[#e4e4e5] pt-[41px] pl-[6px]"><div class="w-4 h-[691px] rounded-full bg-[#c1c1c1]"></div></div>
  </div>
  <div class="absolute left-0 bottom-0 w-full h-[100px] bg-linear-to-b from-transparent to-black/7"></div>
</main>

<!-- dock -->
<footer class="absolute left-[50px] top-[1714px] w-[2780px] h-[86px] rounded-t-[10px] bg-[linear-gradient(90deg,#bb8a63_0px,#c1906a_480px,#d0c2b6_570px,#d8d8d8_680px,#dcdcdc_2780px)] pt-[7px] pl-[6px] flex [&>div]:w-[68.440px] [&>div]:flex [&>div]:flex-col [&>div]:items-center [&>div]:shrink-0 [&_svg]:w-[60px] [&_svg]:h-[64px] [&_svg]:overflow-visible [&_i]:mt-[3px] [&_i]:size-2 [&_i]:rounded-full [&_i]:bg-[#5c5c5c]">
  <div><svg viewBox="0 0 60 64"><rect x="4" y="8" width="52" height="49" rx="3" fill="#e6eef6"/><path d="M4 11q0-3 3-3h29c-4 8-5 16-6 28h7c0 8 0 15 2 21H7q-3 0-3-3z" fill="#2791ee"/><path d="M18 20v6M42 20v6" stroke="#123" stroke-width="3"/><path d="M14 41q16 12 32 0M35 8c-4 8-5 16-6 28h7c0 8 0 15 2 21" fill="none" stroke="#123" stroke-width="1.800"/></svg><i class="!bg-[#4a1c08]"></i></div>
  <div><svg viewBox="0 0 60 64"><rect x="2" y="8" width="56" height="49" rx="3" fill="#232b32"/><text x="5" y="27" font-size="18" fill="#3bee3b" font-family="DejaVu Sans Mono">$</text><path d="M18 13h9v16h-9z" fill="#1d7a26"/></svg><i class="!bg-[#4a1c08]"></i></div>
  <div><svg viewBox="0 0 60 64"><defs><linearGradient id="ff" x1="1" y1="0" x2=".3" y2="1"><stop offset="0" stop-color="#ffe93d"/><stop offset=".45" stop-color="#ff9a2a"/><stop offset="1" stop-color="#f0235f"/></linearGradient></defs><path d="M38 2c-3 6-4 9 0 13 4-1 10 3 12 8l2-5c10 16 6 43-20 43C10 61-3 42 5 19l3-8 8 6c3-2 8-2 11-1 3-4 4-11 11-14z" fill="url(#ff)"/><circle cx="30" cy="36" r="12" fill="#6b3ad8"/><path d="M12 24c8-2 10 4 17 4-2 4-8 3-9 9-4-4-8-8-8-13z" fill="#ff7a1f"/></svg><i class="!bg-[#4a1c08]"></i></div>
  <div><svg viewBox="0 0 60 64"><circle cx="30" cy="32" r="28" fill="#fcca3f"/><path d="M30 32L6 18a28 28 0 0 1 49 1z" fill="#dc4c40"/><path d="M30 32L6 17a28 28 0 0 0 24 43l12-21z" fill="#259b57"/><circle cx="30" cy="32" r="13" fill="#fff"/><circle cx="30" cy="32" r="10.500" fill="#4b87ef"/></svg><i class="!bg-[#4a1c08]"></i></div>
  <div><svg viewBox="0 0 60 64"><circle cx="30" cy="32" r="29" fill="#d6182c"/><path d="M42 6a29 29 0 0 1 0 52q7-10 7-26T42 6z" fill="#fa4a4c"/><ellipse cx="30" cy="32" rx="14" ry="22" fill="#c08f68"/></svg></div>
  <div><svg viewBox="0 0 60 64"><rect x="2" y="4" width="56" height="56" rx="14" fill="#e9393e"/><circle cx="30" cy="32" r="21" fill="#fff"/><path d="M20 25l10 18c4-5 8-11 9-19" fill="none" stroke="#e9393e" stroke-width="7" stroke-linecap="round" stroke-linejoin="round"/></svg></div>
  <div><svg viewBox="0 0 60 64"><path d="M20 0h20l5 6 7 0 3 9-2 6 2 6-9 26-16 11-16-11L5 27l2-6-2-6 3-9h7z" fill="#fb4a24"/><path d="M12 14l10-2 8 2 8-2 10 2 4 7-8 11 2 8-8 6-8 6-8-6-8-6 2-8-8-11z" fill="#fff"/><path d="M16 22l10 2-2 9 6 5 6-5-2-9 10-2M30 38v5l-6 4M30 43l6 4M24 16l6 6 6-6" fill="none" stroke="#fb4a24" stroke-width="3"/></svg></div>
  <div><svg viewBox="0 0 60 64"><circle cx="30" cy="32" r="27" fill="#f5f0fb" stroke="#bd63e6" stroke-width="2.500"/><path d="M12 52a27 27 0 0 0 36 0" fill="none" stroke="#41bdf5" stroke-width="3"/><path d="M24 43V20l18-4v23" fill="none" stroke="#a558df" stroke-width="3.500"/><path d="M24 20l18-4v5l-18 4z" fill="#e4508f"/><ellipse cx="20" cy="44" rx="5.500" ry="4.500" fill="#4a92f0"/><ellipse cx="38" cy="40" rx="5.500" ry="4.500" fill="#8a6fe8"/></svg><i class="!bg-[#4a1c08]"></i></div>
  <div><svg viewBox="0 0 60 64"><circle cx="30" cy="32" r="28" fill="#f7f7f5"/><g opacity=".88"><rect x="24" y="9" width="12" height="22" rx="6" fill="#f7a428"/><rect x="24" y="9" width="12" height="22" rx="6" fill="#e9d72f" transform="rotate(45 30 32)"/><rect x="24" y="9" width="12" height="22" rx="6" fill="#a8cf45" transform="rotate(90 30 32)"/><rect x="24" y="9" width="12" height="22" rx="6" fill="#5cb780" transform="rotate(135 30 32)"/><rect x="24" y="9" width="12" height="22" rx="6" fill="#6fb4e0" transform="rotate(180 30 32)"/><rect x="24" y="9" width="12" height="22" rx="6" fill="#8f7cc4" transform="rotate(225 30 32)"/><rect x="24" y="9" width="12" height="22" rx="6" fill="#d37bb0" transform="rotate(270 30 32)"/><rect x="24" y="9" width="12" height="22" rx="6" fill="#ef5b45" transform="rotate(315 30 32)"/></g></svg><i class="!bg-[#4b3b2c]"></i></div>
  <div><svg viewBox="0 0 60 64"><path d="M6 8l40-6 8 54-40 5z" fill="#fafafa" stroke="#ccc"/><path d="M9 15l38-5M10 21l38-5M11 27l38-5M12 33l38-5M13 39l37-5M14 45l37-5M15 51l37-5" stroke="#c3c9d4"/><path d="M52 2l3 2-14 52-5 6 1-7z" fill="#8fa6ba" stroke="#5a6c7a"/></svg><i></i></div>
  <div><svg viewBox="0 0 60 64"><path d="M44 4l14 6v44l-14 6L2 24l5-5z" fill="#1f8ad2"/><path d="M44 4v56L2 24l5-5 37 27z" fill="#2478b8"/><path d="M2 41l5 5 37-28V4z" fill="#2196e3"/><path d="M44 4l14 6v44l-14 6z" fill="#2f9ff0"/></svg></div>
  <div><svg viewBox="0 0 60 64"><path d="M6 8h48v48H6z" fill="#32d68a"/><path d="M28 56l26-26v26z" fill="#f3f15a"/><path d="M34 8h20v24z" fill="#28c3ee"/><path d="M6 34l22 22H6z" fill="#c8ee57"/><path d="M12 14h36v36H12z" fill="#060606"/><text x="14" y="32" font-size="20" font-weight="bold" fill="#fff" textLength="29" lengthAdjust="spacingAndGlyphs" font-family="Inter">PC</text><path d="M15 43h14v3H15z" fill="#fff"/></svg></div>
  <div><svg viewBox="0 0 60 64"><path d="M5 8l42-6 9 52-42 7z" fill="#c5c8ca"/><path d="M5 8l42-6 2 11-42 6z" fill="#36393b"/><path d="M38 15l11-2 7 41-10 2z" fill="#f18327"/><text x="12" y="15" font-size="9" fill="#eee" textLength="34" transform="rotate(-8 12 15)" font-family="Inter">3.141593</text><path d="M8 29l42-6M10 40l42-7M12 50l42-7M18 18l7 41M28 17l7 41M38 15l7 41" stroke="#8d9092"/></svg><i></i></div>
  <div><svg viewBox="0 0 60 64"><circle cx="22" cy="24" r="18" fill="#189fe0"/><circle cx="38" cy="40" r="18" fill="#1585cc"/><circle cx="30" cy="32" r="24" fill="#1a9ce2"/><path d="M38 23c-6-6-17-4-15 3 2 6 15 4 15 11 0 6-11 7-16 0" fill="none" stroke="#fff" stroke-width="5" stroke-linecap="round"/></svg></div>
  <div><svg viewBox="0 0 60 64"><path d="M8 2h44q6 0 6 6v40q0 6-6 6H38l-8 8-8-8H8q-6 0-6-6V8q0-6 6-6z" fill="#2fa5f1"/><path d="M48 18l-5 4c0 14-9 24-22 23-4 0-7-1-9-3 4 0 7-1 9-3-3-1-5-3-6-5h3c-3-2-5-4-5-8l3 1c-3-3-4-7-2-11 4 5 9 8 15 8-1-6 2-10 7-10 2 0 4 1 5 3z" fill="#fff"/></svg><i></i></div>
  <div><svg viewBox="0 0 60 64"><path d="M4 59l3-12a27 27 0 1 1 10 10z" fill="#3a76f0"/><path d="M8 55l2-8a24 24 0 1 1 8 7z" fill="none" stroke="#fff" stroke-width="2" stroke-dasharray="6 2"/><path d="M12 51l1-7a20 20 0 1 1 6 6z" fill="#fff"/></svg><i></i></div>
  <div><svg viewBox="0 0 60 64"><path d="M4 10l42-8q4 0 5 4l6 45q0 4-4 5l-41 6q-4 0-5-4L2 15z" fill="#2fd56a"/><g stroke="#344a3c" stroke-width="3.500"><path d="M25 32l-12-15M25 32l10-20M25 32h24M25 32l17 18M25 32l-8 18"/></g><g fill="#344a3c"><circle cx="25" cy="32" r="8"/><circle cx="13" cy="17" r="4.500"/><circle cx="35" cy="12" r="4.500"/><circle cx="49" cy="32" r="4.500"/><circle cx="42" cy="50" r="4.500"/><circle cx="17" cy="51" r="4.500"/></g></svg></div>
  <div><svg viewBox="0 0 60 64"><circle cx="30" cy="32" r="28" fill="#fbfbfb" stroke="#ddd"/><g stroke-width="7" stroke-linecap="round"><path d="M25 18v0M16 27h9" stroke="#36c5f0"/><path d="M34 18v9M43 27v0" stroke="#2eb67d"/><path d="M35 37h9M35 46v0" stroke="#ecb22e"/><path d="M25 37v9M16 37v0" stroke="#e01e5a"/></g></svg></div>
  <div><svg viewBox="0 0 60 64"><path d="M2 8h18l6 8C26 6 34 1 42 2c9 0 16 7 16 16s-7 16-14 16l4 12h6v16H36l-6-12-6 12H2V48l8 0 8-14L8 22H2z" fill="#111"/><path d="M6 12h11l11 16c2-8 0-14 6-19 10-6 21 0 20 10-1 8-9 12-16 11l-1 4 8 15h6v9H38L29 42l-8 16H6v-8h7l10-17L11 19H6z" fill="#408a30" stroke="#fff" stroke-width="2.500"/><circle cx="44" cy="16" r="5" fill="#111" stroke="#fff" stroke-width="2"/></svg><i></i></div>
  <div><svg viewBox="0 0 60 64"><path d="M10 60c-2-26 8-48 26-59 12 12 16 32 11 53-12 8-25 8-37 6z" fill="#3f9bdc"/><path d="M36 1c12 12 16 32 11 53l-6 4c2-22 1-40-5-57z" fill="#175695"/><path d="M14 28q14-4 22-14M11 44q16-4 28-16" stroke="#fff" stroke-width="2.500" fill="none"/></svg></div>
  <div><svg viewBox="0 0 60 64"><path d="M14 10l32 44" stroke="#55ab40" stroke-width="12" stroke-linecap="round"/><path d="M46 10L14 54" stroke="#418f32" stroke-width="12" stroke-linecap="round"/></svg></div>
  <div><svg viewBox="0 0 60 64"><path d="M8 12l8 40 14-30 12 30 10-40" fill="none" stroke="#2583c9" stroke-width="11" stroke-linecap="round" stroke-linejoin="round"/></svg><i></i></div>
  <div><svg viewBox="0 0 60 64"><path d="M14 10h22c16 2 16 26-2 26H22v20" fill="none" stroke="#e9502a" stroke-width="12" stroke-linecap="round" stroke-linejoin="round"/></svg></div>
  <div><svg viewBox="0 0 60 64"><path d="M0 1h60v60H0z" fill="#c10b18"/><path d="M14 47c-6 1 10-11 17-11 8 0 18 2 16 6-2 5-20-12-19-24 1-6 4-2 2 5-2 9-9 23-16 24z" fill="none" stroke="#fff" stroke-width="2.500"/></svg><i></i></div>
  <div class="relative"><svg viewBox="0 0 60 64"><rect x="3" y="6" width="54" height="52" rx="3" fill="#9aa3ab"/><circle cx="30" cy="32" r="21" fill="#303336" stroke="#222" stroke-width="4" stroke-dasharray="3 2"/><circle cx="30" cy="32" r="15" fill="none" stroke="#a6abb0" stroke-width="4"/><path d="M30 32V17M30 32l13 8M30 32l-13 8" stroke="#a6abb0" stroke-width="3.500"/></svg><i></i><b class="absolute left-[43px] top-0 size-[25px] rounded-full bg-[#fa4b4b] text-white font-normal text-[15px] leading-[25px] text-center">1</b></div>
  <div><svg viewBox="0 0 60 64"><path d="M31 30q0-7 13-7t13 16-13 17-13-20z" fill="#b88530"/><path d="M33 32l22 18M32 42l16 13M42 24l15 14M55 28L34 48M46 25L32 38M57 40L42 54" stroke="#6d4a14" stroke-width="1.600"/><path d="M44 24L34 8l7 6 2-13 4 12 9-8-5 12 7-2-10 10z" fill="#2d7533"/><path d="M2 26h28q0 18-14 18T2 26z" fill="#e2402f"/><path d="M4 34q12 12 24 0l-4 8H8z" fill="#f6a73a"/><path d="M16 44v15M8 61h16" stroke="#ddd" stroke-width="3"/><path d="M6 26L4 8M14 26L24 10" stroke="#c33" stroke-width="2"/><path d="M16 12l8-7 9 7z" fill="#3ecb48"/><circle cx="5" cy="8" r="3" fill="#e83ac0"/></svg></div>
  <div><svg viewBox="0 0 60 64"><path d="M2 13l42-6 3 38-38 8z" fill="#3da57c" stroke="#0e1114" stroke-width="3.500"/><path d="M12 20l42-6 3 36-40 7z" fill="#3d90d4" stroke="#0e1114" stroke-width="4"/><path d="M14 44l30-28 11-1 1 34-38 6z" fill="#5aaee6" opacity=".5"/></svg><i></i></div>
  <div><svg viewBox="0 0 60 64"><circle cx="30" cy="32" r="28" fill="#d9533c"/><path d="M18 32l8 6-8 10M42 24l-9 9 7 10" fill="none" stroke="#fff" stroke-width="5"/></svg></div>
  <div><svg viewBox="0 0 60 64"><rect x="-2" y="0" width="64" height="64" rx="8" fill="#38a0f3"/><path d="M8 12l10 38 9-38M36 30V16q0-4 5-4h6q5 0 5 5v13M53 36H41q-5 0-5 5v4q0 5 5 5h12" fill="none" stroke="#fff" stroke-width="3.500"/></svg></div>
  <div><svg viewBox="0 0 60 64"><ellipse cx="28" cy="54" rx="17" ry="7" fill="#6c7f9f"/><path d="M4 12L28 1l24 11v34L28 58 4 46z" fill="#173356"/><path d="M28 23v35l24-12V12z" fill="#8ba0be"/><path d="M4 12L28 1l24 11-24 12z" fill="#d8dfe8"/><path d="M14 12l14-7 15 7-15 7z" fill="#173356"/><path d="M32 30l16-8v14l-16 8z" fill="#173356"/><path d="M4 12l24 12v34M28 24l24-12" fill="none" stroke="#fff" stroke-width="2"/></svg></div>
  <div><svg viewBox="0 0 60 64"><path d="M0 62C4 32 22 6 60 2c-6 18-6 40 0 60z" fill="#176ce2"/><path d="M12 62C22 46 40 28 56 8c-4 18-4 38 2 54z" fill="#0c48b8"/><path d="M0 61q8-8 18-6t20 3 20 2v3H0z" fill="#a9cdf5"/></svg></div>
  <div><svg viewBox="0 0 60 64"><circle cx="30" cy="32" r="27" fill="#fb6938" stroke="#fff" stroke-width="2.500"/><circle cx="43" cy="19" r="5" fill="#fff"/><path d="M40 24l5 5-16 15-7-3zM20 42l6 3-10 4z" fill="#fff"/></svg></div>
  <div><svg viewBox="0 0 60 64"><rect x="-1" y="1" width="62" height="62" rx="7" fill="#234e73"/><path d="M8 9c8-3 16 3 20 12 4 8 6 15 11 20l14 5-7 2 7 9M8 9c2 7 0 15 3 23 1 5 3 9 5 6l2-5c5 7 8 16 15 19" fill="none" stroke="#fff" stroke-width="2"/><path d="M43 8l3 6 4-1 0-6c6 2 5 8 3 9l4 8-4 2-5-9c-5 0-8-4-5-9z" fill="#fff"/></svg></div>
  <div><svg viewBox="0 0 60 64"><circle cx="30" cy="32" r="28" fill="#1f7bb0" stroke="#fff" stroke-width="3"/><path d="M11 48c-3-18 1-30 15-29 4-4 16-3 20 3 6 4 5 12 3 20l-5-1v-8c-3 1-4 3-4 6v9h-8V38h-7v10h-4l-3-9-3 9z" fill="#fff"/></svg></div>
  <div><svg viewBox="0 0 60 64"><path d="M8 7h46v34H8z" fill="#8a6a42"/><path d="M0 20l44-8 6 38-43 8z" fill="#fff"/><path d="M3 22l39-7 5 32-37 7z" fill="#4b86cf"/><path d="M5 36l39-6 3 17-37 7z" fill="#b7c6d8"/><path d="M8 46l12-4 10 8-20 4z" fill="#b58c62"/><circle cx="44" cy="40" r="11" fill="#9bb0c2" stroke="#444" stroke-width="3"/><path d="M33 44q11 12 22 0v10q-11 10-22 0z" fill="#6e6048"/></svg><i></i></div>
  <div><svg viewBox="0 0 60 64"><path d="M14 44l32-5 12 12-34 10z" fill="#555" stroke="#eee" stroke-width="2"/><rect x="2" y="8" width="54" height="34" rx="3" fill="#a6a6a6"/><path d="M2 8h54v8H2z" fill="#c9c9c9"/><circle cx="31" cy="24" r="15" fill="#222" stroke="#d9d9d9" stroke-width="2"/><circle cx="31" cy="24" r="8" fill="#3c506c"/><circle cx="28" cy="20" r="3" fill="#b9cbe0"/></svg></div>
  <div><svg viewBox="0 0 60 64"><rect x="1" y="4" width="58" height="57" rx="5" fill="#a9a59d"/><rect x="6" y="9" width="48" height="47" rx="2" fill="#2b2208"/><path d="M6 20h48M6 30h48M6 40h48M18 9v47M30 9v47M42 9v47" stroke="#594812"/><path d="M8 36h6l4-20 5 30 4-16 3 8h18" fill="none" stroke="#f5cf26" stroke-width="2.500"/><path d="M42 14h7M42 18h7M42 22h7" stroke="#f5cf26" stroke-width="2"/><text x="25" y="53" font-size="8.500" textLength="26" fill="#d8b327" font-family="Inter">-20 dB</text></svg></div>
  <span class="ml-[13px] w-[2px] h-[62px] bg-[#a5a5a5] shrink-0"></span>
  <div class="ml-[14px]"><svg viewBox="0 0 60 64"><path d="M0 12q0-4 4-4h14l5 5h33q4 0 4 4v37H0z" fill="#62bdeb"/><path d="M0 19h60v34q0 3-3 3H3q-3 0-3-3z" fill="#7dd0f7"/><path d="M30 24L19 48M30 24l11 24M16 40h28" fill="none" stroke="#4ba6d6" stroke-width="3"/></svg></div>
  <div><svg viewBox="0 0 60 64"><path d="M12 4h38v56H12z" fill="#efefef"/><path d="M8 5h42v55H8z" fill="#fcfcfc"/><path d="M9 6v54" stroke="#222" stroke-width="4" stroke-dasharray="2.500 2"/><path d="M16 14h10M16 18h12M16 22h12M16 26h12M16 30h12M16 34h12M16 38h12M16 42h12M16 46h12M32 26h14M32 30h14M32 34h14M32 44h10M32 52h10" stroke="#8b8b8b" stroke-width="1.500"/><path d="M32 4l18 20c-2-5-6-6-8-6 0-6-4-12-10-14z" fill="#cacaca"/></svg></div>
  <div class="ml-[3px]"><svg viewBox="0 0 60 64"><path d="M8 10h44l-6 47q-16 7-32 0z" fill="#efefef" stroke="#cfcfcf"/><path d="M8 10l6-7 8 3 8-5 8 6 8-4 6 7-8 5H16z" fill="#9b9b9b"/><path d="M14 6l6 6M28 4l4 8M40 6l-4 7" stroke="#333" stroke-width="3"/><path d="M18 26l6 26M30 22v32M42 26l-6 26" stroke="#dcdcdc" stroke-width="3"/></svg></div>
</footer>

<script>
  // Letter-space each label so it fills its designed width, once the stylesheet is in force.
  function fitLabels() {
    if (getComputedStyle(document.body).position !== 'relative') return;
    document.querySelectorAll('[data-w]').forEach(function (el) {
      el.style.letterSpacing = '0px';
      var gap = +el.dataset.w - el.getBoundingClientRect().width;
      el.style.letterSpacing = (gap / el.textContent.length).toFixed(3) + 'px';
    });
  }
  fitLabels();
  addEventListener('load', fitLabels);
  document.fonts.ready.then(fitLabels);
  [50, 150, 400].forEach(function (t) { setTimeout(fitLabels, t); });
</script>
</body>
</html>
